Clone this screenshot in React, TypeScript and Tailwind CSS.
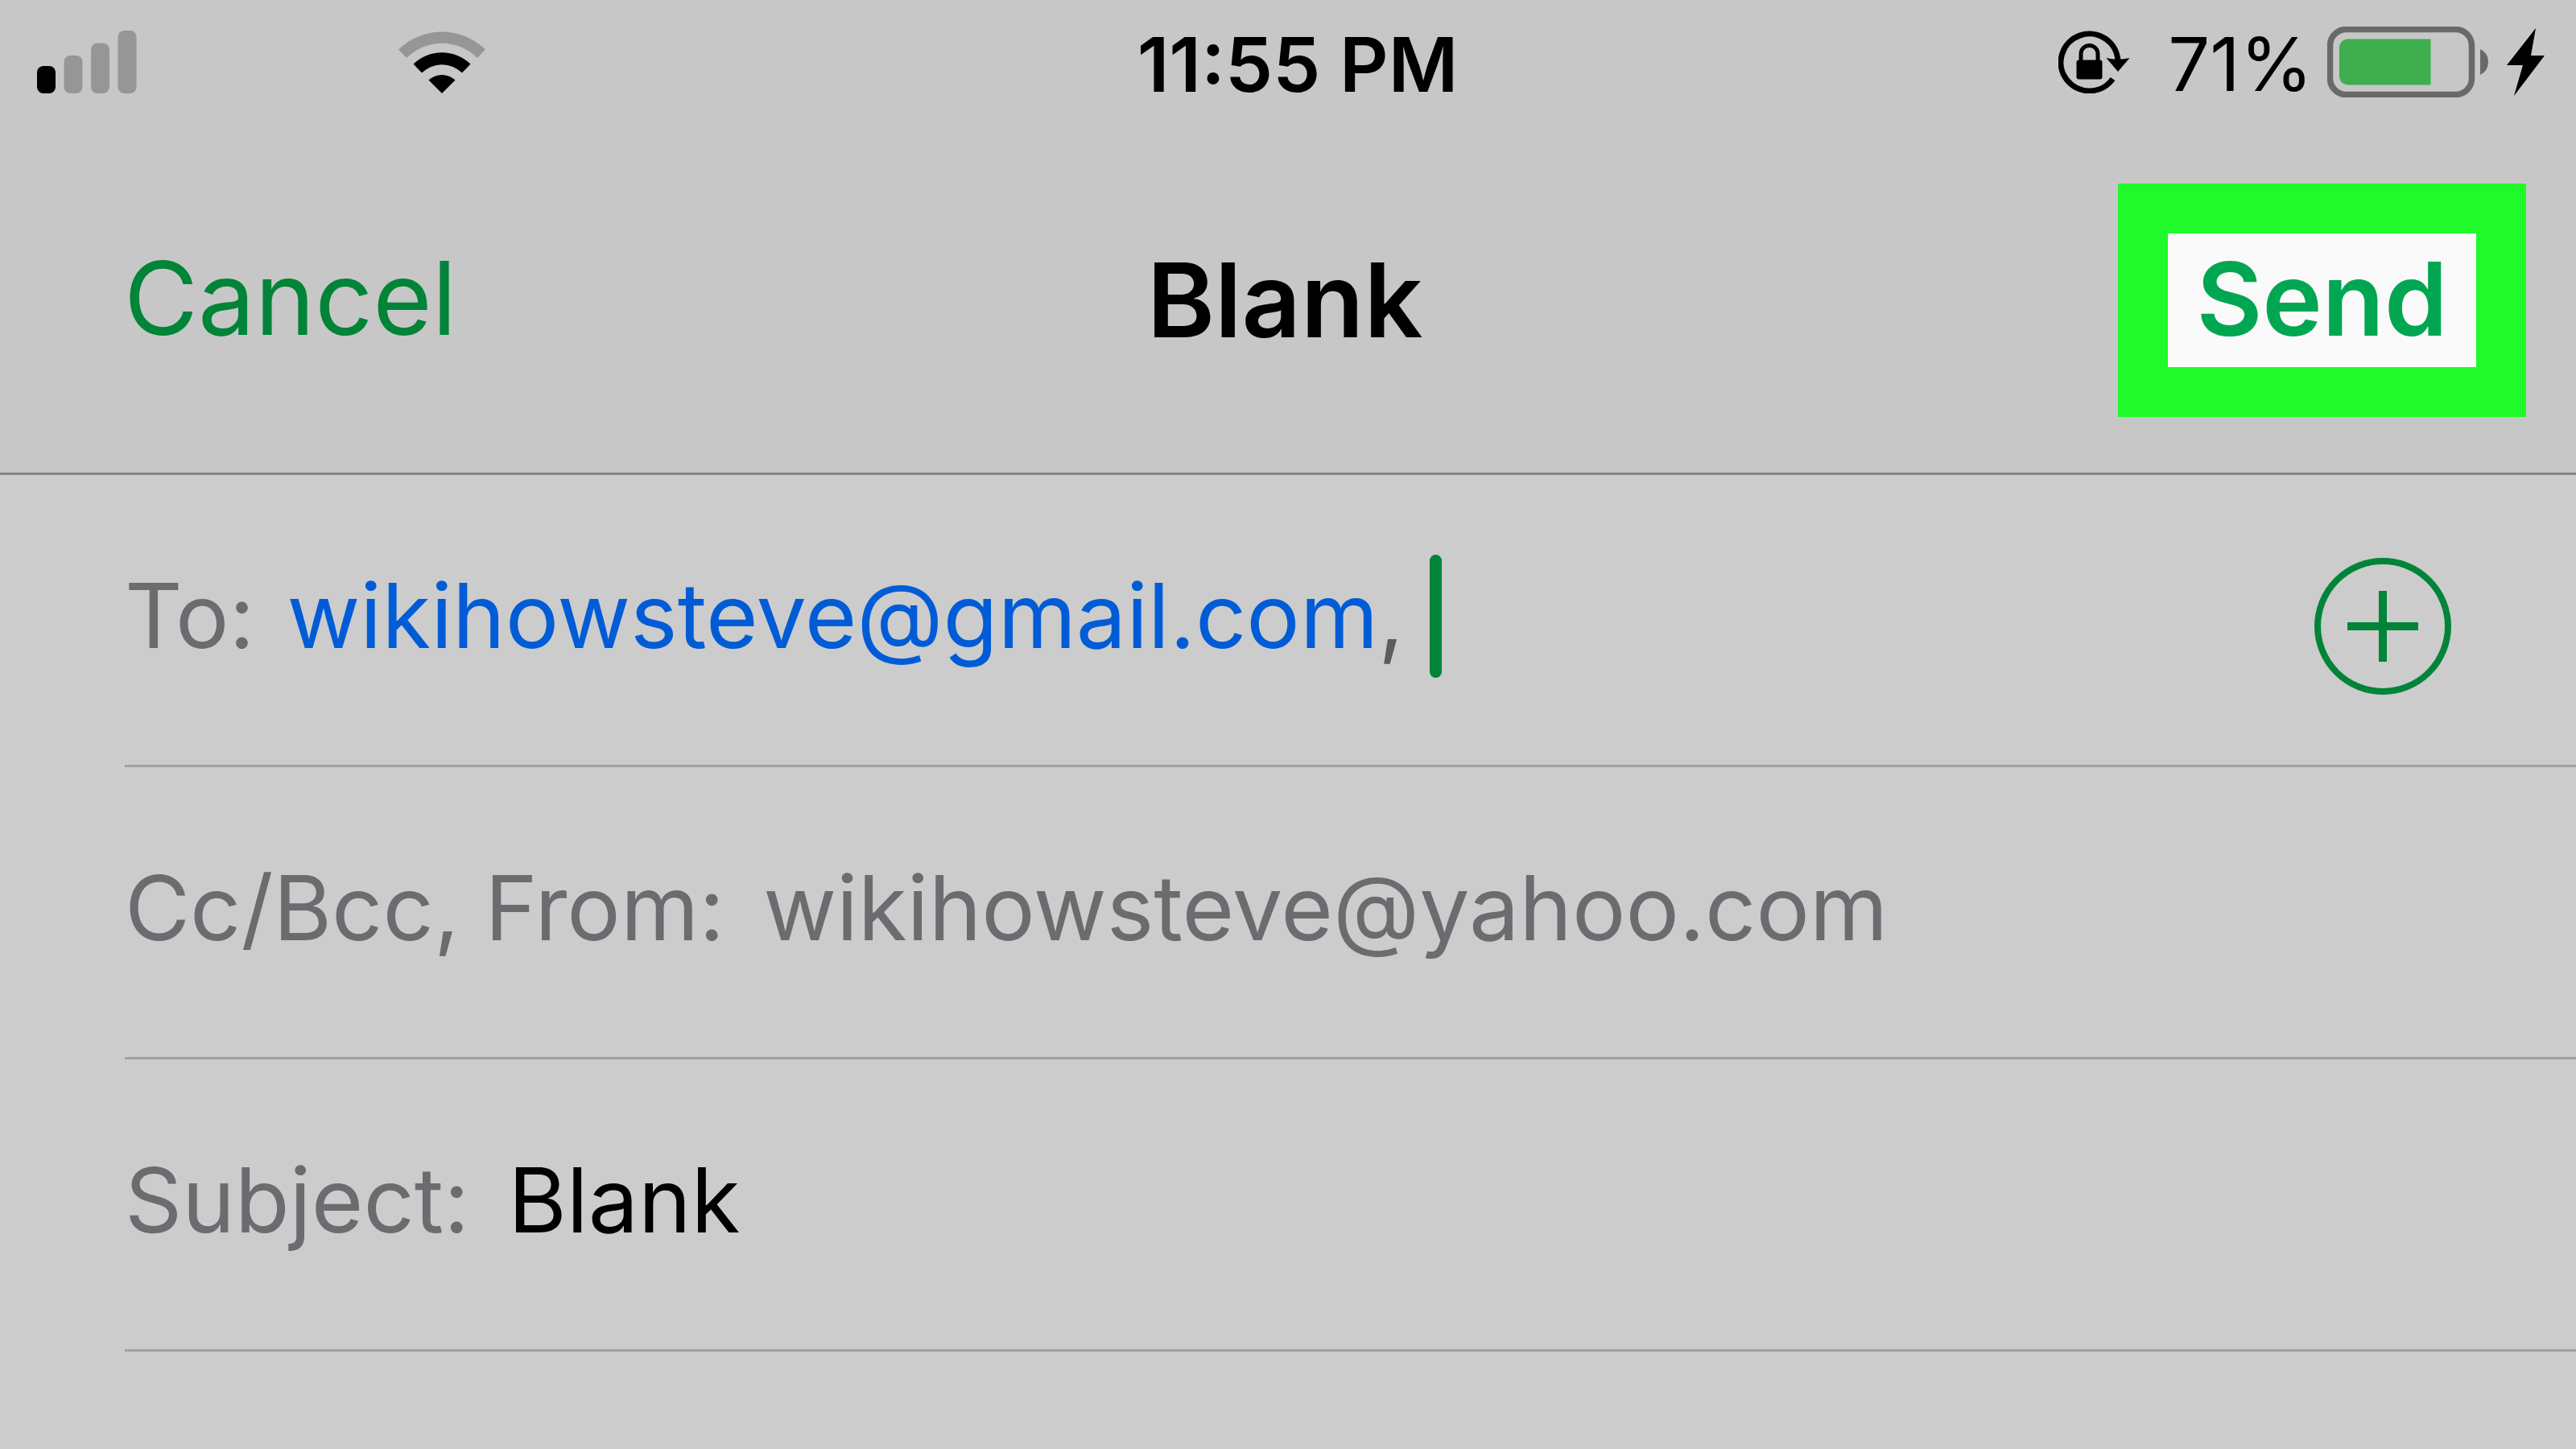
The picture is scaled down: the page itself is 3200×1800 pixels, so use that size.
import { useState } from "react";

function SignalIcon() {
  return (
    <svg className="mb-1.5 h-[78px] w-[124px]" viewBox="0 0 124 78" role="img" aria-label="Signal: one bar">
      <rect x="0" y="44" width="23" height="34" rx="8" fill="#000" />
      <rect x="33.500" y="31" width="23" height="47" rx="8" fill="#969696" />
      <rect x="67" y="15.500" width="23" height="62.500" rx="8" fill="#969696" />
      <rect x="100.500" y="0" width="23" height="78" rx="8" fill="#969696" />
    </svg>
  );
}

function WifiIcon() {
  return (
    <svg className="mb-1.5 h-[78px] w-[110px]" viewBox="-55 -78 110 78" role="img" aria-label="Wi-Fi">
      <path d="M-54 -54.500 A77.500 77.500 0 0 1 54 -54.500 L44 -44 A62 62 0 0 0 -44 -44 Z" fill="#969696" />
      <path d="M-35.500 -36.500 A51.500 51.500 0 0 1 35.500 -36.500 L25 -25.500 A35.500 35.500 0 0 0 -25 -25.500 Z" fill="#000" />
      <path d="M0 0 L-16.500 -16.500 A24 24 0 0 1 16.500 -16.500 Z" fill="#000" />
    </svg>
  );
}

function RotationLockIcon() {
  return (
    <svg className="mb-1.5 h-[78px] w-[90px]" viewBox="0 0 90 78" role="img" aria-label="Rotation locked">
      <path d="M74 38 A35.500 35.500 0 1 0 67.500 60" fill="none" stroke="#000" strokeWidth="7" />
      <path d="M59.500 34 Q74 37.500 88.500 34 L74 51 Z" fill="#000" />
      <path d="M28 38 V29 A10.500 10.500 0 0 1 49 29 V38" fill="none" stroke="#000" strokeWidth="5" />
      <rect x="22.500" y="36.500" width="32" height="24" rx="3" fill="#000" />
    </svg>
  );
}

function BatteryIcon() {
  return (
    <svg className="mb-1.5 h-[88px] w-[202px]" viewBox="0 0 202 88" role="img" aria-label="Battery">
      <rect x="3.500" y="3.500" width="176" height="81" rx="20" fill="none" stroke="#696969" strokeWidth="7.500" />
      <path d="M25 15.500 H128.500 V72.500 H25 Q15 71 15 61 V27 Q15 17 25 15.500 Z" fill="#3fae4f" />
      <path d="M190 28 Q200 33 200 44 Q200 55 190 60 Z" fill="#696969" />
    </svg>
  );
}

function BoltIcon() {
  return (
    <svg className="mb-1.5 h-[84px] w-[48px]" viewBox="0 0 48 84" role="img" aria-label="Charging">
      <path d="M36 0 L0 46 H20 L9 84 L47 34 H30 Z" fill="#000" />
    </svg>
  );
}

function PlusCircleIcon() {
  return (
    <svg className="size-[170px]" viewBox="0 0 170 170" aria-hidden="true">
      <circle cx="85" cy="85" r="81" fill="none" stroke="#008438" strokeWidth="8" />
      <path d="M41 85 H129 M85 41 V129" stroke="#008438" strokeWidth="10" />
    </svg>
  );
}

const row = "flex h-[363px] items-center border-b-[3px] border-[#a0a0a0]";
const line = "flex min-w-0 flex-1 items-center pb-2.5 text-[111px] leading-[150px]";
const field = "bg-transparent outline-none";

export default function App() {
  const [to, setTo] = useState("wikihowsteve@gmail.com");
  const [from, setFrom] = useState("wikihowsteve@yahoo.com");
  const [subject, setSubject] = useState("Blank");

  return (
    <div className="min-h-screen overflow-hidden bg-[#cccccc] font-['Inter',sans-serif] text-black">
      <header className="border-b-[3px] border-[#858585] bg-[#c7c7c7]">
        <div className="grid h-[159px] grid-cols-[1fr_auto_1fr] items-center pr-[38px] pl-[46px] text-[92px] leading-none">
          <div className="flex items-center gap-[324px]">
            <SignalIcon />
            <WifiIcon />
          </div>
          <time className="pl-4 text-[94px] leading-none font-semibold">11:55 PM</time>
          <div className="flex items-center justify-end">
            <RotationLockIcon />
            <span className="pr-[18px] pl-[46px]">71%</span>
            <BatteryIcon />
            <span className="pl-[21px]">
              <BoltIcon />
            </span>
          </div>
        </div>
        <nav className="grid h-[428px] grid-cols-[1fr_auto_1fr] items-center px-[62px] text-[126px] leading-none">
          <button type="button" className="justify-self-start pb-1.5 pl-[92px] text-[#008438]">
            Cancel
          </button>
          <h1 className="pr-2 text-[128px] leading-none font-semibold">Blank</h1>
          <button
            type="button"
            className="h-[290px] w-[507px] justify-self-end border-[62px] border-[#20fa2b] bg-[#fafafa] pb-1 font-semibold text-[#00a651]"
          >
            Send
          </button>
        </nav>
      </header>

      <form className="pl-[155px]" onSubmit={(e) => e.preventDefault()}>
        <div className={row}>
          <div className={line}>
            <label htmlFor="to" className="pr-10 text-[#6b6b70]">
              To:
            </label>
            <input
              id="to"
              type="text"
              value={to}
              onChange={(e) => setTo(e.target.value)}
              className={`${field} [field-sizing:content] text-[#005cd6]`}
            />
            <span className="text-[#5c5c5c]">,</span>
            <span className="ml-8 h-[153px] w-[15px] rounded-full bg-[#008438]" />
          </div>
          <button type="button" aria-label="Add contact" className="mt-4 mr-[155px]">
            <PlusCircleIcon />
          </button>
        </div>
        <div className={row}>
          <div className={line}>
            <label htmlFor="from" className="pr-12 text-[#6b6b70]">
              Cc/Bcc, From:
            </label>
            <input
              id="from"
              type="text"
              value={from}
              onChange={(e) => setFrom(e.target.value)}
              className={`${field} min-w-0 flex-1 text-[#6b6b70]`}
            />
          </div>
        </div>
        <div className={row}>
          <div className={line}>
            <label htmlFor="subject" className="pr-12 text-[#6b6b70]">
              Subject:
            </label>
            <input
              id="subject"
              type="text"
              value={subject}
              onChange={(e) => setSubject(e.target.value)}
              className={`${field} min-w-0 flex-1 text-black`}
            />
          </div>
        </div>
      </form>
    </div>
  );
}
